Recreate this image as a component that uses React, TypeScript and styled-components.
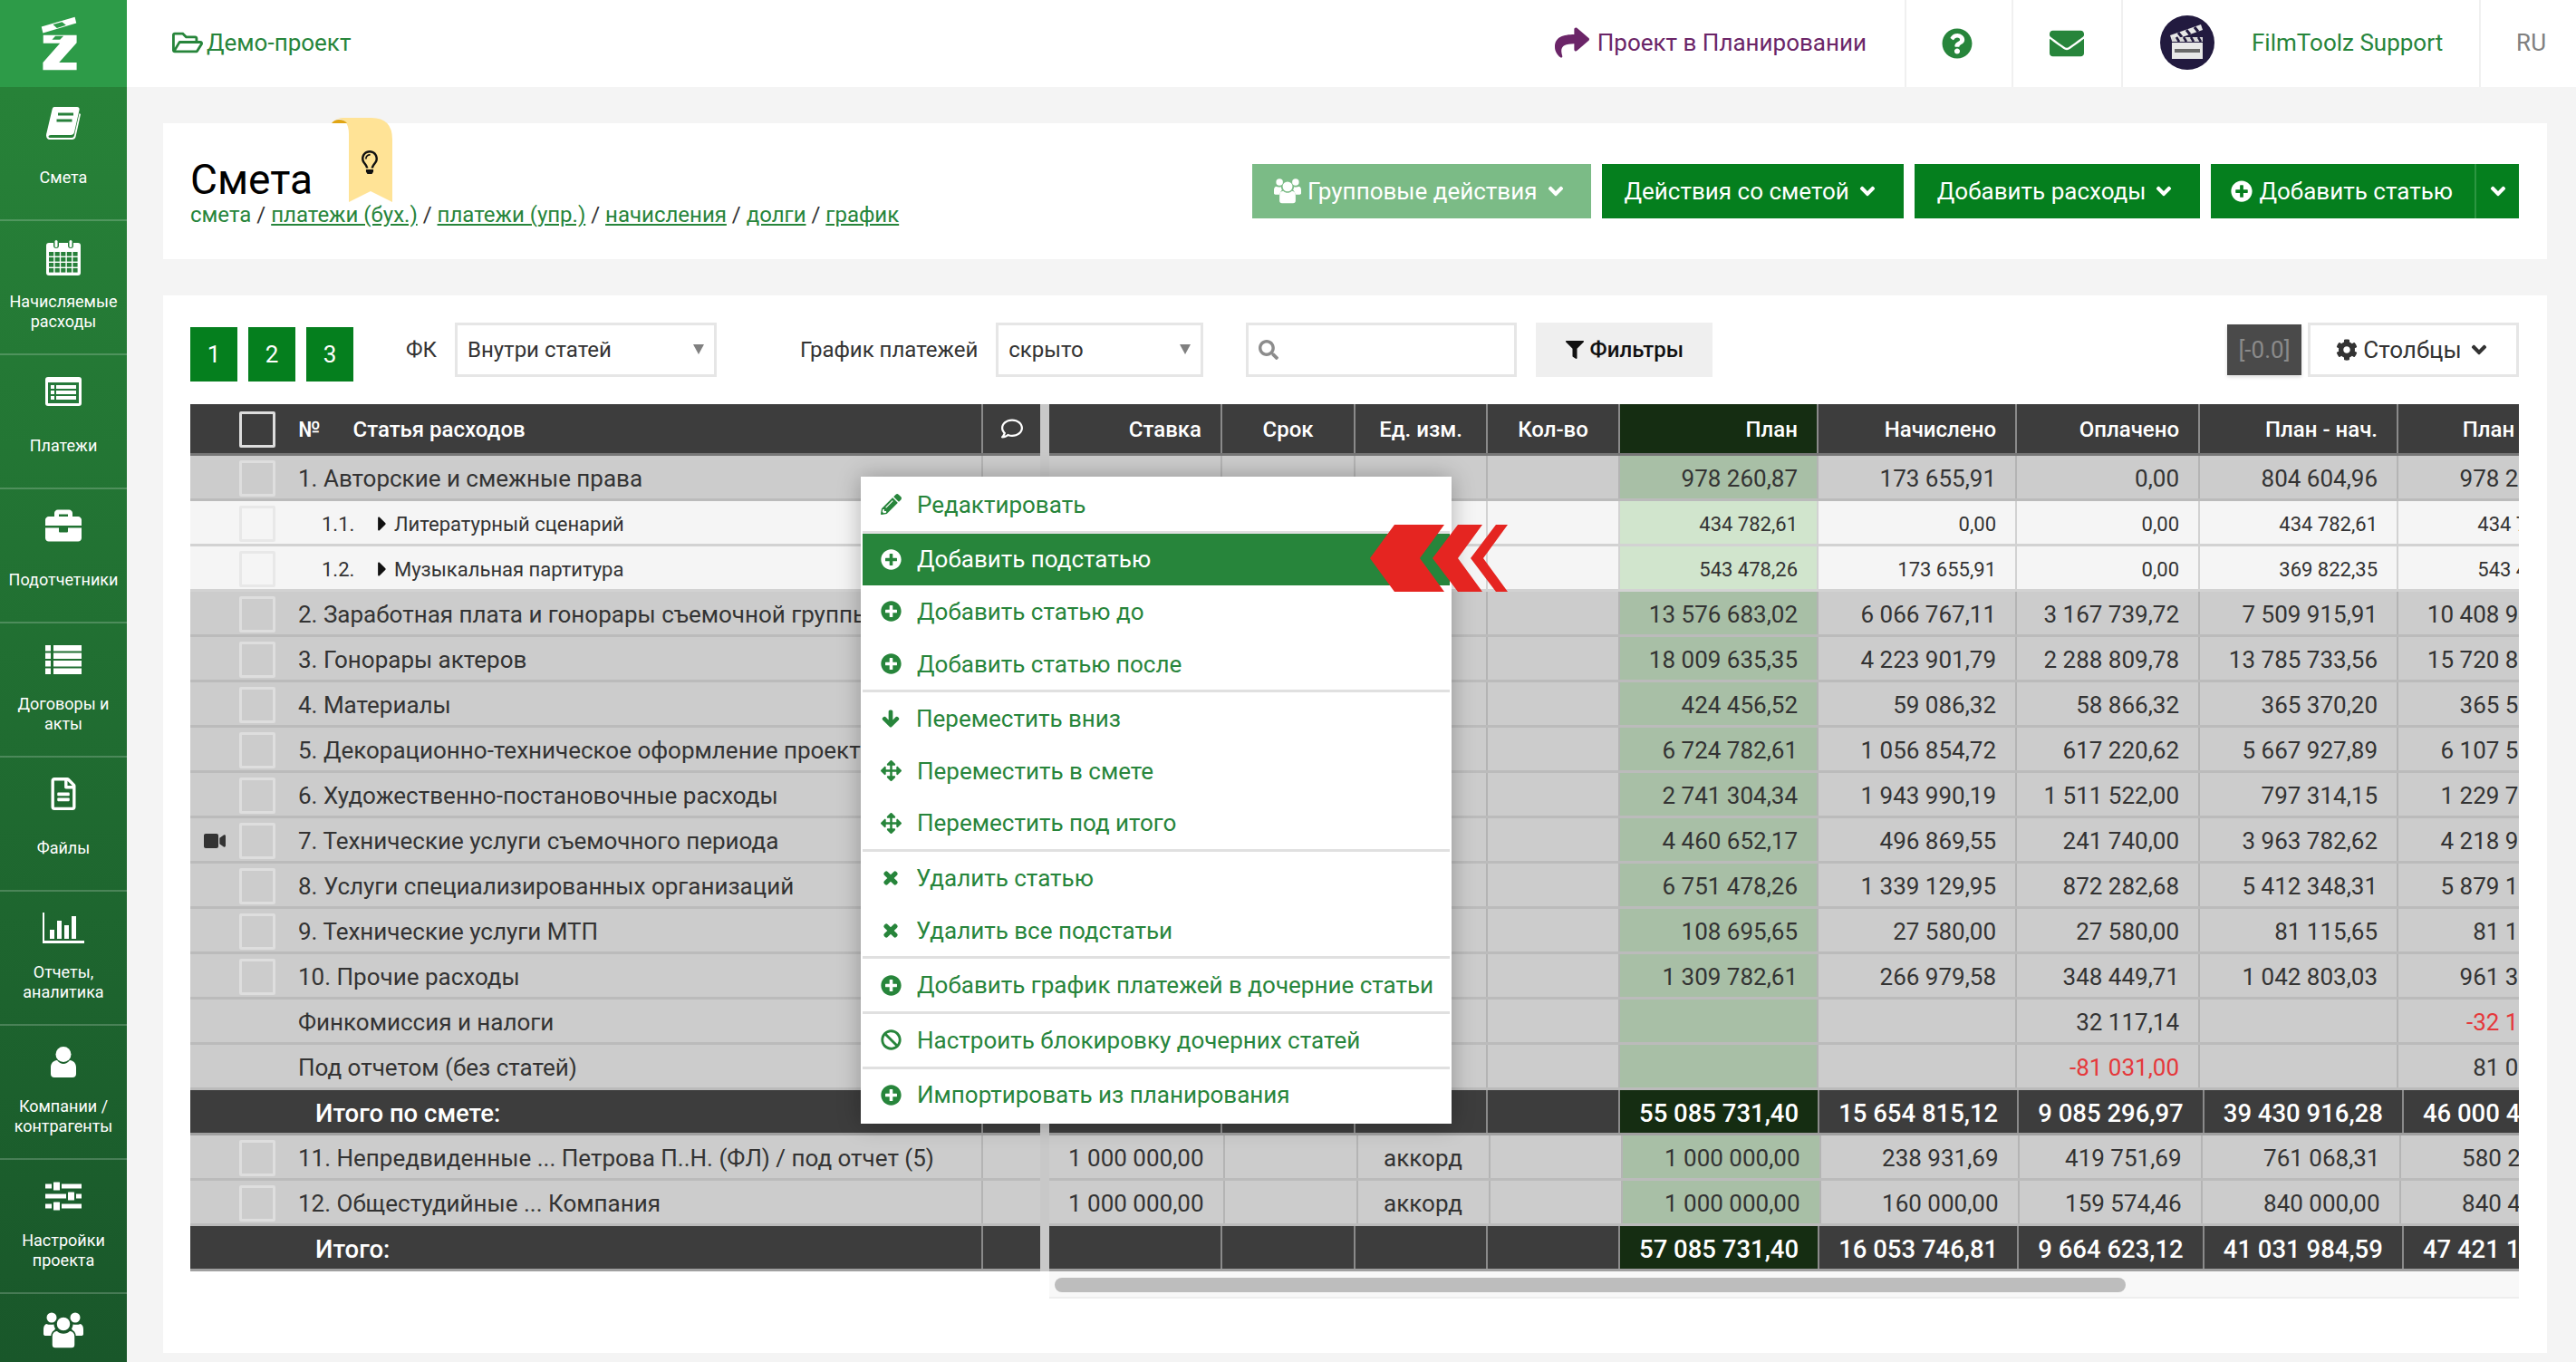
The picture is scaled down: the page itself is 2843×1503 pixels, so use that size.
import styled, { createGlobalStyle } from 'styled-components'
import {
  FaAngleDown,
  FaArrowDown,
  FaArrowsAlt,
  FaBan,
  FaBriefcase,
  FaCaretRight,
  FaCog,
  FaEnvelope,
  FaFilter,
  FaPencilAlt,
  FaPlusCircle,
  FaQuestionCircle,
  FaRegComment,
  FaRegFileAlt,
  FaRegFolderOpen,
  FaRegLightbulb,
  FaSearch,
  FaShare,
  FaTimes,
  FaVideo
} from 'react-icons/fa'

const green = '#057f1e'
const menuGreen = '#27853b'

const GlobalStyle = createGlobalStyle`
  html, body {
    margin: 0;
    padding: 0;
    height: 100%;
    overflow: hidden;
    background: #f4f4f4;
    font-family: Roboto, "Noto Sans", sans-serif;
    color: #333;
  }
  * {
    box-sizing: border-box;
  }
`

const Page = styled.div`
  display: flex;
  width: 2843px;
  height: 1503px;
  overflow: hidden;
`

const Sidebar = styled.nav`
  flex: 0 0 140px;
  height: 100%;
  overflow: hidden;
  background: linear-gradient(180deg, #288539 0%, #19572a 100%);
`

const LogoBlock = styled.div`
  height: 96px;
  display: flex;
  align-items: center;
  justify-content: center;
  padding-right: 8px;
  background: #2d9b48;
`

const NavItem = styled.a`
  display: block;
  height: 148px;
  padding-top: 20px;
  border-bottom: 2px solid rgba(255, 255, 255, 0.2);
  color: #fff;
  text-align: center;
`

const NavIcon = styled.div`
  height: 40px;
  display: flex;
  align-items: center;
  justify-content: center;
  color: #fff;
`

const NavLabel = styled.div`
  height: 44px;
  margin-top: 18px;
  display: flex;
  align-items: center;
  justify-content: center;
  padding: 0 6px;
  font-size: 18px;
  line-height: 22px;
`

const Main = styled.div`
  flex: 1;
  min-width: 0;
`

const Header = styled.header`
  height: 96px;
  background: #fff;
  display: flex;
  align-items: stretch;
`

const ProjectLink = styled.a`
  display: flex;
  align-items: center;
  gap: 4px;
  padding: 0 0 3px 50px;
  font-size: 26px;
  color: ${menuGreen};
`

const PlanningLink = styled.a`
  margin-left: auto;
  display: flex;
  align-items: center;
  gap: 9px;
  padding: 0 42px 3px 0;
  font-size: 26px;
  color: #6b2568;
`

const HeaderCell = styled.div<{ $w: number; $shift?: number }>`
  flex: 0 0 ${(p) => p.$w}px;
  border-left: 2px solid #f0f0f0;
  display: flex;
  align-items: center;
  justify-content: center;
  padding-right: ${(p) => p.$shift ?? 0}px;
  color: ${menuGreen};
  font-size: 26px;
`

const UserCell = styled(HeaderCell)`
  justify-content: flex-start;
  gap: 41px;
  padding: 0 0 3px 41px;
`

const LangCell = styled(HeaderCell)`
  justify-content: flex-end;
  padding: 0 33px 3px 0;
  color: #808080;
`

const Content = styled.div`
  padding: 40px 32px 0 40px;
`

const TopPanel = styled.section`
  position: relative;
  height: 150px;
  background: #fff;
  padding: 40px 31px 0 30px;
  display: flex;
  justify-content: space-between;
`

const Title = styled.h1`
  margin: 0;
  font-size: 46px;
  line-height: 44px;
  font-weight: 400;
  color: #000;
`

const Crumbs = styled.div`
  margin-top: 0;
  font-size: 24px;
  line-height: 34px;
  color: #333;
  a {
    color: ${menuGreen};
    text-decoration: underline;
  }
  span {
    color: ${menuGreen};
  }
`

const Ribbon = styled.svg`
  position: absolute;
  left: 186px;
  top: -6px;
`

const BulbIcon = styled.div`
  position: absolute;
  left: 215px;
  top: 30px;
  color: #111;
  font-size: 26px;
  line-height: 0;
`

const Actions = styled.div`
  display: flex;
  gap: 12px;
  padding-top: 5px;
`

const ActionButton = styled.button`
  height: 60px;
  border: 0;
  margin: 0;
  padding: 0 27px 0 25px;
  display: flex;
  align-items: center;
  gap: 7px;
  background: ${green};
  color: #fff;
  font: 26px Roboto, sans-serif;
  white-space: nowrap;
`

const MutedButton = styled(ActionButton)`
  padding: 0 26px 0 24px;
  background: #7bbb86;
`

const SplitButton = styled.div`
  display: flex;
`

const SplitMain = styled(ActionButton)`
  padding: 0 24px 0 22px;
`

const SplitToggle = styled(ActionButton)`
  width: 49px;
  padding: 0;
  justify-content: center;
  border-left: 2px solid #2c9541;
`

const BudgetPanel = styled.section`
  margin-top: 40px;
  height: 1167px;
  background: #fff;
  padding: 30px 31px 0 30px;
`

const Toolbar = styled.div`
  height: 65px;
  display: flex;
  align-items: flex-start;
`

const PageButtons = styled.div`
  display: flex;
  gap: 12px;
  padding-top: 5px;
  margin-right: 58px;
`

const PageButton = styled.button`
  width: 52px;
  height: 60px;
  border: 0;
  padding: 0;
  background: ${green};
  color: #fff;
  font: 26px Roboto, sans-serif;
`

const FieldLabel = styled.label<{ $left: number }>`
  height: 60px;
  line-height: 60px;
  margin-left: ${(p) => p.$left}px;
  margin-right: 20px;
  font-size: 24px;
  white-space: nowrap;
`

const SelectBox = styled.div<{ $w: number }>`
  position: relative;
  width: ${(p) => p.$w}px;
  height: 60px;
  line-height: 54px;
  border: 3px solid #e6e6e6;
  padding-left: 11px;
  font-size: 24px;
  &::after {
    content: '';
    position: absolute;
    right: 11px;
    top: 21px;
    border-left: 6px solid transparent;
    border-right: 6px solid transparent;
    border-top: 11px solid #808080;
  }
`

const SearchBox = styled.div`
  width: 299px;
  height: 60px;
  margin-left: 47px;
  border: 3px solid #e6e6e6;
  padding-left: 11px;
  display: flex;
  align-items: center;
  color: #8c8c8c;
  font-size: 22px;
`

const FilterButton = styled.button`
  width: 195px;
  height: 60px;
  margin-left: 21px;
  border: 0;
  background: #efefef;
  color: #111;
  display: flex;
  align-items: center;
  justify-content: center;
  gap: 7px;
  font: 500 24px Roboto, sans-serif;
`

const ToolbarRight = styled.div`
  margin-left: auto;
  display: flex;
  gap: 7px;
`

const RoundingButton = styled.button`
  width: 82px;
  height: 56px;
  margin-top: 2px;
  border: 0;
  padding: 0;
  background: #4a4a4a;
  color: #8a8a8a;
  font: 26px Roboto, sans-serif;
  box-shadow: 0 2px 4px rgba(0, 0, 0, 0.15);
`

const ColumnsButton = styled.button`
  width: 233px;
  height: 60px;
  border: 3px solid #e6e6e6;
  background: #fff;
  color: #333;
  display: flex;
  align-items: center;
  justify-content: center;
  gap: 6px;
  font: 26px Roboto, sans-serif;
`

const TableArea = styled.div`
  position: relative;
  margin-top: 25px;
  display: flex;
  background: #c8c8c8;
  gap: 10px;
  width: 2570px;
`

const FrozenPart = styled.div`
  flex: 0 0 938px;
`

const ScrollPart = styled.div`
  flex: 1;
  min-width: 0;
  overflow: hidden;
`

type RowKind = 'head' | 'main' | 'sub' | 'total'

const rowBack: Record<RowKind, string> = {
  head: '#3d3d3d',
  main: '#cccccc',
  sub: '#f5f5f5',
  total: '#3d3d3d'
}

const rowLine: Record<RowKind, string> = {
  head: '#777777',
  main: '#bbbbbb',
  sub: '#d2d2d2',
  total: '#a0a0a0'
}

const Row = styled.div<{ $kind: RowKind }>`
  height: ${(p) => (p.$kind === 'head' ? 57 : 50)}px;
  display: flex;
  background: ${(p) => rowBack[p.$kind]};
  border-bottom: 3px solid ${(p) => rowLine[p.$kind]};
  color: ${(p) => (p.$kind === 'head' || p.$kind === 'total' ? '#fff' : '#333')};
  font-size: ${(p) => (p.$kind === 'sub' ? 22 : p.$kind === 'total' ? 27.5 : 26)}px;
  font-weight: ${(p) => (p.$kind === 'head' || p.$kind === 'total' ? 500 : 400)};
  line-height: 51px;
  white-space: nowrap;
`

const HeadRow = styled(Row)`
  font-size: 24px;
  line-height: 57px;
`

const MarkCell = styled.div`
  flex: 0 0 54px;
  padding: 2px 0 0 15px;
  display: flex;
  align-items: center;
  font-size: 24px;
  color: #333;
`

const CheckBox = styled.div<{ $kind: RowKind }>`
  flex: 0 0 40px;
  height: 40px;
  margin-top: ${(p) => (p.$kind === 'head' ? 8 : 5)}px;
  border: 3px solid ${(p) => (p.$kind === 'head' ? '#dddddd' : p.$kind === 'sub' ? '#e8e8e8' : '#dedede')};
  border-radius: 2px;
`

const NameCell = styled.div<{ $indent?: number }>`
  flex: 1;
  min-width: 0;
  overflow: hidden;
  padding-left: ${(p) => p.$indent ?? 25}px;
  display: flex;
`

const SubNumber = styled.span`
  flex: 0 0 54px;
`

const SubCaret = styled.span`
  flex: 0 0 24px;
  display: flex;
  align-items: center;
  padding-top: 3px;
  font-size: 26px;
  color: #111;
`

const HeadName = styled.span`
  margin-left: 36px;
`

const CommentCell = styled.div<{ $kind: RowKind }>`
  flex: 0 0 65px;
  border-left: 2px solid ${(p) => (p.$kind === 'head' || p.$kind === 'total' ? '#8a8a8a' : '#b4b4b4')};
  display: flex;
  align-items: center;
  justify-content: center;
  font-size: 24px;
`

const columnWidths = [189, 147, 146, 146, 219, 219, 202, 219, 219]

const ValueCell = styled.div<{ $i: number; $kind: RowKind; $red?: boolean }>`
  flex: 0 0 ${(p) => columnWidths[p.$i]}px;
  padding: 0 ${(p) => (p.$i > 0 && p.$i < 4 ? 0 : 21)}px;
  display: flex;
  justify-content: ${(p) => (p.$i > 0 && p.$i < 4 ? 'center' : 'flex-end')};
  border-left: 2px solid ${(p) => (p.$kind === 'head' || p.$kind === 'total' ? '#8a8a8a' : p.$kind === 'sub' ? '#d2d2d2' : '#b4b4b4')};
  color: ${(p) => (p.$red ? '#e5383b' : 'inherit')};
  background: ${(p) =>
    p.$i !== 4
      ? 'transparent'
      : p.$kind === 'sub'
        ? '#d1e5cd'
        : p.$kind === 'main'
          ? '#a8bfa6'
          : '#152d12'};
  &:first-child {
    border-left: 0;
  }
`

const ScrollTrack = styled.div`
  margin-left: 948px;
  width: 1622px;
  height: 30px;
  padding: 7px 0 0 6px;
  background: #f8f8f8;
  border-bottom: 2px solid #eeeeee;
`

const ScrollThumb = styled.div`
  width: 1182px;
  height: 16px;
  border-radius: 8px;
  background: #bdbdbd;
`

const ContextMenu = styled.div`
  position: absolute;
  left: 740px;
  top: 80px;
  width: 652px;
  padding: 2px 2px 3px;
  background: #fff;
  box-shadow: 0 0 24px rgba(0, 0, 0, 0.28);
`

const MenuItem = styled.div<{ $active?: boolean }>`
  position: relative;
  height: 57.6px;
  padding-left: 20px;
  display: flex;
  align-items: center;
  gap: 17px;
  background: ${(p) => (p.$active ? menuGreen : 'transparent')};
  color: ${(p) => (p.$active ? '#fff' : menuGreen)};
  font-size: 26px;
  white-space: nowrap;
`

const MenuIcon = styled.span<{ $heavy?: boolean }>`
  flex: 0 0 22px;
  display: flex;
  align-items: center;
  justify-content: center;
  font-size: ${(p) => (p.$heavy ? 20 : 23)}px;
  svg {
    stroke: currentColor;
    stroke-width: ${(p) => (p.$heavy ? 40 : 0)}px;
  }
`

const MenuDivider = styled.div`
  height: 3px;
  background: #e0e0e0;
`

const Chevrons = styled.svg`
  position: absolute;
  left: 560px;
  top: -10px;
`

const hintRed = '#e52521'

const BookIcon = () => (
  <svg width="38" height="36" viewBox="0 0 38 36">
    <path
      fill="#fff"
      d="M9 0h25c2 0 3 1.500 2.500 3.500L31 28c-.5 2-2 3-4 3H5c-1.500 0-2.500.8-2.500 1.800S3.500 34 5 34h23c1.500 0 2.500-.8 3-2.500L36.500 7l1.500 1-5.500 25c-.5 2-2 3-4 3H4c-2.500 0-4-2-4-4.500 0-1 .1-2 .5-3L6.500 3C7 1 7.500 0 9 0z"
    />
    <path stroke="#27803a" strokeWidth="3" d="M13 8h17M11.500 15h17" />
  </svg>
)

const CalendarIcon = () => {
  const cells = []
  for (let r = 0; r < 4; r++) {
    for (let c = 0; c < 5; c++) {
      cells.push(<rect key={`${r}-${c}`} x={3 + c * 6.6} y={14 + r * 6} width="5.200" height="4.600" fill="#27803a" />)
    }
  }
  return (
    <svg width="38" height="40" viewBox="0 0 38 40">
      <rect y="4" width="38" height="36" rx="3" fill="#fff" />
      {cells}
      <rect x="8" y="0" width="6" height="10" rx="3" fill="#27803a" />
      <rect x="24" y="0" width="6" height="10" rx="3" fill="#27803a" />
      <rect x="9.500" y="1" width="3" height="8" rx="1.500" fill="#fff" />
      <rect x="25.500" y="1" width="3" height="8" rx="1.500" fill="#fff" />
    </svg>
  )
}

const PaymentsIcon = () => (
  <svg width="40" height="32" viewBox="0 0 40 32">
    <rect width="40" height="32" rx="3" fill="#fff" />
    <rect x="3" y="6" width="34" height="23" fill="#25793a" />
    <g fill="#fff">
      {[9, 15, 21].map((y) => (
        <g key={y}>
          <rect x="6" y={y} width="4" height="4" />
          <rect x="12" y={y} width="22" height="4" />
        </g>
      ))}
    </g>
  </svg>
)

const ListIcon = () => (
  <svg width="40" height="32" viewBox="0 0 40 32" fill="#fff">
    {[0, 8.5, 17, 25.5].map((y) => (
      <g key={y}>
        <rect y={y} width="6" height="6.500" />
        <rect x="9" y={y} width="31" height="6.500" />
      </g>
    ))}
  </svg>
)

const ChartIcon = () => (
  <svg width="46" height="34" viewBox="0 0 46 34" fill="#fff">
    <path d="M0 0h2v31h44v3H0z" />
    <rect x="8" y="19" width="5" height="10" />
    <rect x="16" y="9" width="5" height="20" />
    <rect x="24" y="14" width="5" height="15" />
    <rect x="32" y="4" width="5" height="25" />
  </svg>
)

const UserIcon = () => (
  <svg width="28" height="34" viewBox="0 0 28 34" fill="#fff">
    <circle cx="14" cy="8.500" r="8.500" />
    <path d="M7 15c2 2.500 4.500 4 7 4s5-1.500 7-4c4 .5 7 3 7 8v7c0 2.500-1.500 4-4 4H4c-2.500 0-4-1.500-4-4v-7c0-5 3-7.500 7-8z" />
  </svg>
)

const SlidersIcon = () => (
  <svg width="40" height="34" viewBox="0 0 40 34" fill="#fff">
    <rect y="3.500" width="40" height="5" />
    <rect y="14.500" width="40" height="5" />
    <rect y="25.500" width="40" height="5" />
    <rect x="8" y="0.500" width="9" height="11" rx="1.500" stroke="#1d6230" strokeWidth="2" />
    <rect x="24" y="11.500" width="9" height="11" rx="1.500" stroke="#1d6230" strokeWidth="2" />
    <rect x="8" y="22.500" width="9" height="11" rx="1.500" stroke="#1d6230" strokeWidth="2" />
  </svg>
)

const UsersIcon = ({ size, line }: { size: number; line?: string }) => (
  <svg width={size} height={(size * 40) / 44} viewBox="0 0 44 40" fill="#fff">
    <circle cx="9" cy="6" r="5.500" />
    <circle cx="35" cy="6" r="5.500" />
    <path d="M3 13c-2 1-3 3-3 6v5c0 1.500 1 2 2.500 2H9c1-3 2.500-6 4-7.500-1-2-1.500-3.500-1.500-5C9 14 6 14 3 13zM41 13c2 1 3 3 3 6v5c0 1.500-1 2-2.500 2H35c-1-3-2.500-6-4-7.500 1-2 1.500-3.500 1.500-5 2.500.5 5.500.5 8.500-.5z" />
    <circle cx="22" cy="13" r="8" stroke={line} strokeWidth="1.500" />
    <path d="M15 20c2 2 4.500 3 7 3s5-1 7-3c4 .5 6 3 6 7v9c0 2.500-1.500 4-4 4H13c-2.500 0-4-1.500-4-4v-9c0-4 2-6.500 6-7z" stroke={line} strokeWidth="1.500" />
  </svg>
)

const navItems = [
  { icon: <BookIcon />, label: 'Смета' },
  { icon: <CalendarIcon />, label: 'Начисляемые расходы' },
  { icon: <PaymentsIcon />, label: 'Платежи' },
  { icon: <FaBriefcase size={40} />, label: 'Подотчетники' },
  { icon: <ListIcon />, label: 'Договоры и акты' },
  { icon: <FaRegFileAlt size={36} />, label: 'Файлы' },
  { icon: <ChartIcon />, label: 'Отчеты, аналитика' },
  { icon: <UserIcon />, label: 'Компании / контрагенты' },
  { icon: <SlidersIcon />, label: 'Настройки проекта' },
  { icon: <UsersIcon size={44} line="#1a572a" />, label: '' }
]

type BudgetRow = {
  kind: RowKind
  name: string
  no?: string
  video?: boolean
  noCheck?: boolean
  rate?: string
  unit?: string
  values: string[]
}

const rows: BudgetRow[] = [
  { kind: 'main', name: '1. Авторские и смежные права', values: ['978 260,87', '173 655,91', '0,00', '804 604,96', '978 260,87'] },
  { kind: 'sub', no: '1.1.', name: 'Литературный сценарий', values: ['434 782,61', '0,00', '0,00', '434 782,61', '434 782,61'] },
  { kind: 'sub', no: '1.2.', name: 'Музыкальная партитура', values: ['543 478,26', '173 655,91', '0,00', '369 822,35', '543 478,26'] },
  { kind: 'main', name: '2. Заработная плата и гонорары съемочной группы', values: ['13 576 683,02', '6 066 767,11', '3 167 739,72', '7 509 915,91', '10 408 943,30'] },
  { kind: 'main', name: '3. Гонорары актеров', values: ['18 009 635,35', '4 223 901,79', '2 288 809,78', '13 785 733,56', '15 720 825,57'] },
  { kind: 'main', name: '4. Материалы', values: ['424 456,52', '59 086,32', '58 866,32', '365 370,20', '365 590,20'] },
  { kind: 'main', name: '5. Декорационно-техническое оформление проекта', values: ['6 724 782,61', '1 056 854,72', '617 220,62', '5 667 927,89', '6 107 561,99'] },
  { kind: 'main', name: '6. Художественно-постановочные расходы', values: ['2 741 304,34', '1 943 990,19', '1 511 522,00', '797 314,15', '1 229 782,34'] },
  { kind: 'main', video: true, name: '7. Технические услуги съемочного периода', values: ['4 460 652,17', '496 869,55', '241 740,00', '3 963 782,62', '4 218 912,17'] },
  { kind: 'main', name: '8. Услуги специализированных организаций', values: ['6 751 478,26', '1 339 129,95', '872 282,68', '5 412 348,31', '5 879 195,58'] },
  { kind: 'main', name: '9. Технические услуги МТП', values: ['108 695,65', '27 580,00', '27 580,00', '81 115,65', '81 115,65'] },
  { kind: 'main', name: '10. Прочие расходы', values: ['1 309 782,61', '266 979,58', '348 449,71', '1 042 803,03', '961 332,90'] },
  { kind: 'main', noCheck: true, name: 'Финкомиссия и налоги', values: ['', '', '32 117,14', '', '-32 117,14'] },
  { kind: 'main', noCheck: true, name: 'Под отчетом (без статей)', values: ['', '', '-81 031,00', '', '81 031,00'] },
  { kind: 'total', noCheck: true, name: 'Итого по смете:', values: ['55 085 731,40', '15 654 815,12', '9 085 296,97', '39 430 916,28', '46 000 434,43'] },
  { kind: 'main', name: '11. Непредвиденные ... Петрова П..Н. (ФЛ) / под отчет (5)', rate: '1 000 000,00', unit: 'аккорд', values: ['1 000 000,00', '238 931,69', '419 751,69', '761 068,31', '580 248,31'] },
  { kind: 'main', name: '12. Общестудийные ... Компания', rate: '1 000 000,00', unit: 'аккорд', values: ['1 000 000,00', '160 000,00', '159 574,46', '840 000,00', '840 425,54'] },
  { kind: 'total', noCheck: true, name: 'Итого:', values: ['57 085 731,40', '16 053 746,81', '9 664 623,12', '41 031 984,59', '47 421 108,28'] }
]

const columnTitles = ['Ставка', 'Срок', 'Ед. изм.', 'Кол-во', 'План', 'Начислено', 'Оплачено', 'План - нач.', 'План - опл.']

type MenuEntry = { icon: React.ReactNode; label: string; active?: boolean; heavy?: boolean } | 'divider'

const menu: MenuEntry[] = [
  { icon: <FaPencilAlt />, label: 'Редактировать' },
  'divider',
  { icon: <FaPlusCircle />, label: 'Добавить подстатью', active: true },
  { icon: <FaPlusCircle />, label: 'Добавить статью до' },
  { icon: <FaPlusCircle />, label: 'Добавить статью после' },
  'divider',
  { icon: <FaArrowDown />, label: 'Переместить вниз', heavy: true },
  { icon: <FaArrowsAlt />, label: 'Переместить в смете' },
  { icon: <FaArrowsAlt />, label: 'Переместить под итого' },
  'divider',
  { icon: <FaTimes />, label: 'Удалить статью', heavy: true },
  { icon: <FaTimes />, label: 'Удалить все подстатьи', heavy: true },
  'divider',
  { icon: <FaPlusCircle />, label: 'Добавить график платежей в дочерние статьи' },
  'divider',
  { icon: <FaBan />, label: 'Настроить блокировку дочерних статей' },
  'divider',
  { icon: <FaPlusCircle />, label: 'Импортировать из планирования' }
]

const Logo = () => (
  <svg width="42" height="62" viewBox="45 30 125 185" fill="#fff">
    <path
      fillRule="evenodd"
      d="M47 67L157 35l5 20L52 88zM85 60l13 12 30-10-13-10z"
    />
    <path
      fillRule="evenodd"
      d="M53 95h110v25l-58 65h58v25H52v-25l56-63H53zM82 110h26l12-12H93z"
    />
  </svg>
)

const Avatar = () => (
  <svg width="60" height="60" viewBox="0 0 60 60">
    <circle cx="30" cy="30" r="30" fill="#221a3f" />
    <path d="M11 22L45 10l2 6-34 12z" fill="#e8e8e8" />
    <path d="M20 19l4 5M29 16l4 5M38 13l4 5" stroke="#221a3f" strokeWidth="3" />
    <rect x="13" y="24" width="34" height="5" fill="#d8d8d8" />
    <rect x="13" y="30" width="34" height="18" fill="#e8e8e8" />
    <path d="M18 24l3 5M26 24l3 5M34 24l3 5M42 24l3 5" stroke="#221a3f" strokeWidth="2.500" />
    <rect x="16" y="37" width="28" height="4" fill="#6a6a6a" />
  </svg>
)

const BudgetRows = () => (
  <>
    {rows.map((row, i) => (
      <Row key={i} $kind={row.kind}>
        <MarkCell>{row.video && <FaVideo />}</MarkCell>
        {row.noCheck ? (
          <NameCell $indent={row.kind === 'total' ? 84 : 65}>{row.name}</NameCell>
        ) : (
          <>
            <CheckBox $kind={row.kind} />
            {row.no ? (
              <NameCell $indent={51}>
                <SubNumber>{row.no}</SubNumber>
                <SubCaret>
                  <FaCaretRight />
                </SubCaret>
                {row.name}
              </NameCell>
            ) : (
              <NameCell>{row.name}</NameCell>
            )}
          </>
        )}
        <CommentCell $kind={row.kind} />
      </Row>
    ))}
  </>
)

const ValueRows = () => (
  <>
    {rows.map((row, i) => (
      <Row key={i} $kind={row.kind}>
        <ValueCell $i={0} $kind={row.kind}>{row.rate}</ValueCell>
        <ValueCell $i={1} $kind={row.kind} />
        <ValueCell $i={2} $kind={row.kind}>{row.unit}</ValueCell>
        <ValueCell $i={3} $kind={row.kind} />
        {row.values.map((value, j) => (
          <ValueCell key={j} $i={j + 4} $kind={row.kind} $red={value.startsWith('-')}>
            {value}
          </ValueCell>
        ))}
      </Row>
    ))}
  </>
)

const App = () => (
  <Page>
    <GlobalStyle />
    <Sidebar>
      <LogoBlock>
        <Logo />
      </LogoBlock>
      {navItems.map((item, i) => (
        <NavItem key={i}>
          <NavIcon>{item.icon}</NavIcon>
          <NavLabel>{item.label}</NavLabel>
        </NavItem>
      ))}
    </Sidebar>
    <Main>
      <Header>
        <ProjectLink>
          <FaRegFolderOpen size={34} />
          Демо-проект
        </ProjectLink>
        <PlanningLink>
          <FaShare size={38} />
          Проект в Планировании
        </PlanningLink>
        <HeaderCell $w={118} $shift={4}>
          <FaQuestionCircle size={34} />
        </HeaderCell>
        <HeaderCell $w={121} $shift={2}>
          <FaEnvelope size={38} />
        </HeaderCell>
        <UserCell $w={395}>
          <Avatar />
          FilmToolz Support
        </UserCell>
        <LangCell $w={107}>RU</LangCell>
      </Header>
      <Content>
        <TopPanel>
          <Ribbon width="67" height="93" viewBox="0 0 67 93">
            <path d="M4 0H44Q67 0 67 24V93L43 81L19 93V18Q19 0 4 0z" fill="#ffe396" />
            <path d="M0 6Q3 2 8 2Q14 2 17 6z" fill="#e0a514" />
          </Ribbon>
          <BulbIcon>
            <FaRegLightbulb />
          </BulbIcon>
          <div>
            <Title>Смета</Title>
            <Crumbs>
              <span>смета</span> / <a>платежи (бух.)</a> / <a>платежи (упр.)</a> / <a>начисления</a> / <a>долги</a> / <a>график</a>
            </Crumbs>
          </div>
          <Actions>
            <MutedButton>
              <UsersIcon size={30} />
              Групповые действия
              <FaAngleDown size={26} />
            </MutedButton>
            <ActionButton>
              Действия со сметой
              <FaAngleDown size={26} />
            </ActionButton>
            <ActionButton>
              Добавить расходы
              <FaAngleDown size={26} />
            </ActionButton>
            <SplitButton>
              <SplitMain>
                <FaPlusCircle size={24} />
                Добавить статью
              </SplitMain>
              <SplitToggle>
                <FaAngleDown size={26} />
              </SplitToggle>
            </SplitButton>
          </Actions>
        </TopPanel>
        <BudgetPanel>
          <Toolbar>
            <PageButtons>
              <PageButton>1</PageButton>
              <PageButton>2</PageButton>
              <PageButton>3</PageButton>
            </PageButtons>
            <FieldLabel $left={0}>ФК</FieldLabel>
            <SelectBox $w={289}>Внутри статей</SelectBox>
            <FieldLabel $left={92}>График платежей</FieldLabel>
            <SelectBox $w={229}>скрыто</SelectBox>
            <SearchBox>
              <FaSearch />
            </SearchBox>
            <FilterButton>
              <FaFilter size={20} />
              Фильтры
            </FilterButton>
            <ToolbarRight>
              <RoundingButton>[-0.0]</RoundingButton>
              <ColumnsButton>
                <FaCog size={24} />
                Столбцы
                <FaAngleDown size={26} />
              </ColumnsButton>
            </ToolbarRight>
          </Toolbar>
          <TableArea>
            <FrozenPart>
              <HeadRow $kind="head">
                <MarkCell />
                <CheckBox $kind="head" />
                <NameCell>
                  №<HeadName>Статья расходов</HeadName>
                </NameCell>
                <CommentCell $kind="head">
                  <FaRegComment />
                </CommentCell>
              </HeadRow>
              <BudgetRows />
            </FrozenPart>
            <ScrollPart>
              <HeadRow $kind="head">
                {columnTitles.map((title, i) => (
                  <ValueCell key={title} $i={i} $kind="head">
                    {title}
                  </ValueCell>
                ))}
              </HeadRow>
              <ValueRows />
            </ScrollPart>
            <ContextMenu>
              {menu.map((entry, i) =>
                entry === 'divider' ? (
                  <MenuDivider key={i} />
                ) : (
                  <MenuItem key={entry.label} $active={entry.active}>
                    <MenuIcon $heavy={entry.heavy}>{entry.icon}</MenuIcon>
                    {entry.label}
                    {entry.active && (
                      <Chevrons width="152" height="74" viewBox="0 0 152 74" fill={hintRed}>
                        <path d="M0 37L27 0H82L55 37L82 74H27z" />
                        <path d="M69 37L97 0H124L97 37L124 74H97z" />
                        <path d="M111 37L139 0H152L125 37L152 74H139z" />
                      </Chevrons>
                    )}
                  </MenuItem>
                )
              )}
            </ContextMenu>
          </TableArea>
          <ScrollTrack>
            <ScrollThumb />
          </ScrollTrack>
        </BudgetPanel>
      </Content>
    </Main>
  </Page>
)

export default App
